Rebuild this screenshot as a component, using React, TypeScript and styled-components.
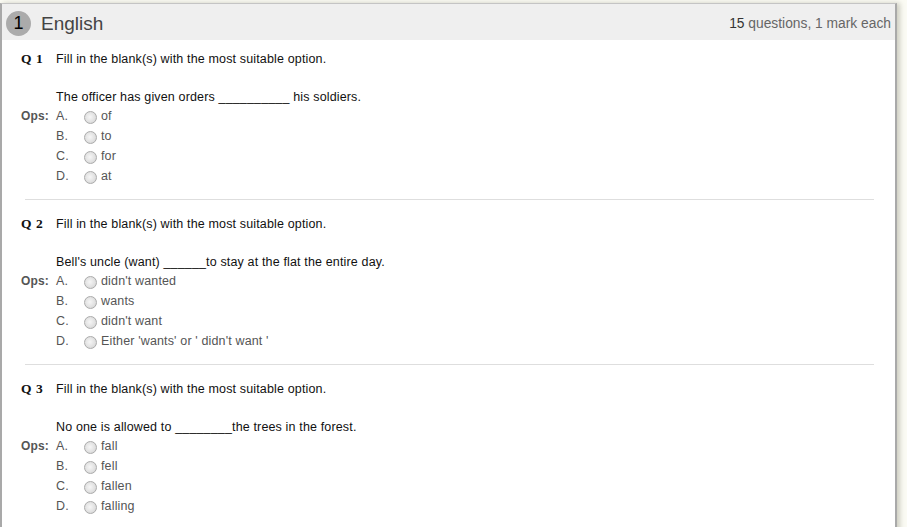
import styled, { createGlobalStyle } from 'styled-components';

const GlobalStyle = createGlobalStyle`
  body {
    margin: 0;
    background: #fbfbf4;
    font-family: "Liberation Sans", Arial, sans-serif;
  }
`;

const Page = styled.div`
  padding-top: 3px;
  width: 907px;
  height: 527px;
  overflow: hidden;
`;

const Panel = styled.section`
  width: 893px;
  min-height: 530px;
  background: #fff;
  border-top: 1px solid #c4c4c4;
  border-left: 2px solid #a9a9a9;
  border-right: 2px solid #a9a9a9;
  box-shadow: 3px 0 5px rgba(120, 120, 100, 0.35);
`;

const Header = styled.header`
  display: flex;
  align-items: center;
  justify-content: space-between;
  height: 36px;
  box-sizing: border-box;
  padding: 3px 4px 0 4px;
  background: #efefef;
`;

const Title = styled.div`
  display: flex;
  align-items: center;
  gap: 10px;
`;

const Badge = styled.span`
  display: flex;
  align-items: center;
  justify-content: center;
  width: 25px;
  height: 25px;
  border-radius: 50%;
  background: #ababab;
  color: #000;
  font-size: 18px;
`;

const TitleText = styled.span`
  font-size: 19px;
  color: #444;
`;

const Meta = styled.span`
  font-size: 13.8px;
  color: #666;

  b {
    font-weight: normal;
    color: #333;
  }
`;

const Body = styled.div`
  padding: 9px 21px 0 19px;
`;

const Question = styled.div`
  display: grid;
  grid-template-columns: 35px 1fr;
  font-size: 12.5px;
  letter-spacing: 0.15px;
  color: #111;
`;

const QLabel = styled.span`
  font-family: "Liberation Serif", "Times New Roman", serif;
  font-weight: bold;
  font-size: 13.5px;
  letter-spacing: 0.5px;
  line-height: 20px;
`;

const Prompt = styled.span`
  line-height: 20px;
`;

const Sentence = styled.span`
  line-height: 18px;
  margin-top: 19px;
`;

const OpsLabel = styled.span`
  font-size: 12px;
  font-weight: bold;
  color: #555;
  line-height: 20px;
`;

const Options = styled.div`
  display: flex;
  flex-direction: column;
`;

const Option = styled.label`
  display: flex;
  align-items: center;
  height: 20px;
  color: #555;
`;

const Letter = styled.span`
  width: 28px;
`;

const Radio = styled.span`
  width: 11px;
  height: 11px;
  margin-right: 4px;
  margin-top: 2px;
  border-radius: 50%;
  border: 1px solid #ababab;
  background: radial-gradient(circle at 45% 45%, #f6f6f6 0%, #e0e0e0 60%, #cbcbcb 100%);
`;

const Divider = styled.hr`
  border: none;
  border-top: 1px solid #dedede;
  margin: 13px 0 14px 4px;
`;

const questions = [
  {
    sentence: 'The officer has given orders __________ his soldiers.',
    options: ['of', 'to', 'for', 'at'],
  },
  {
    sentence: "Bell's uncle (want) ______to stay at the flat the entire day.",
    options: ["didn't wanted", 'wants', "didn't want", "Either 'wants' or ' didn't want '"],
  },
  {
    sentence: 'No one is allowed to ________the trees in the forest.',
    options: ['fall', 'fell', 'fallen', 'falling'],
  },
];

const letters = ['A.', 'B.', 'C.', 'D.'];

export default function App() {
  return (
    <Page>
      <GlobalStyle />
      <Panel>
        <Header>
          <Title>
            <Badge>1</Badge>
            <TitleText>English</TitleText>
          </Title>
          <Meta>
            <b>15</b> questions, 1 mark each
          </Meta>
        </Header>
        <Body>
          {questions.map((q, i) => (
            <div key={i}>
              {i > 0 && <Divider />}
              <Question>
                <QLabel>Q {i + 1}</QLabel>
                <Prompt>Fill in the blank(s) with the most suitable option.</Prompt>
                <span />
                <Sentence>{q.sentence}</Sentence>
                <OpsLabel>Ops:</OpsLabel>
                <Options>
                  {q.options.map((o, j) => (
                    <Option key={j}>
                      <Letter>{letters[j]}</Letter>
                      <Radio />
                      {o}
                    </Option>
                  ))}
                </Options>
              </Question>
            </div>
          ))}
        </Body>
      </Panel>
    </Page>
  );
}
